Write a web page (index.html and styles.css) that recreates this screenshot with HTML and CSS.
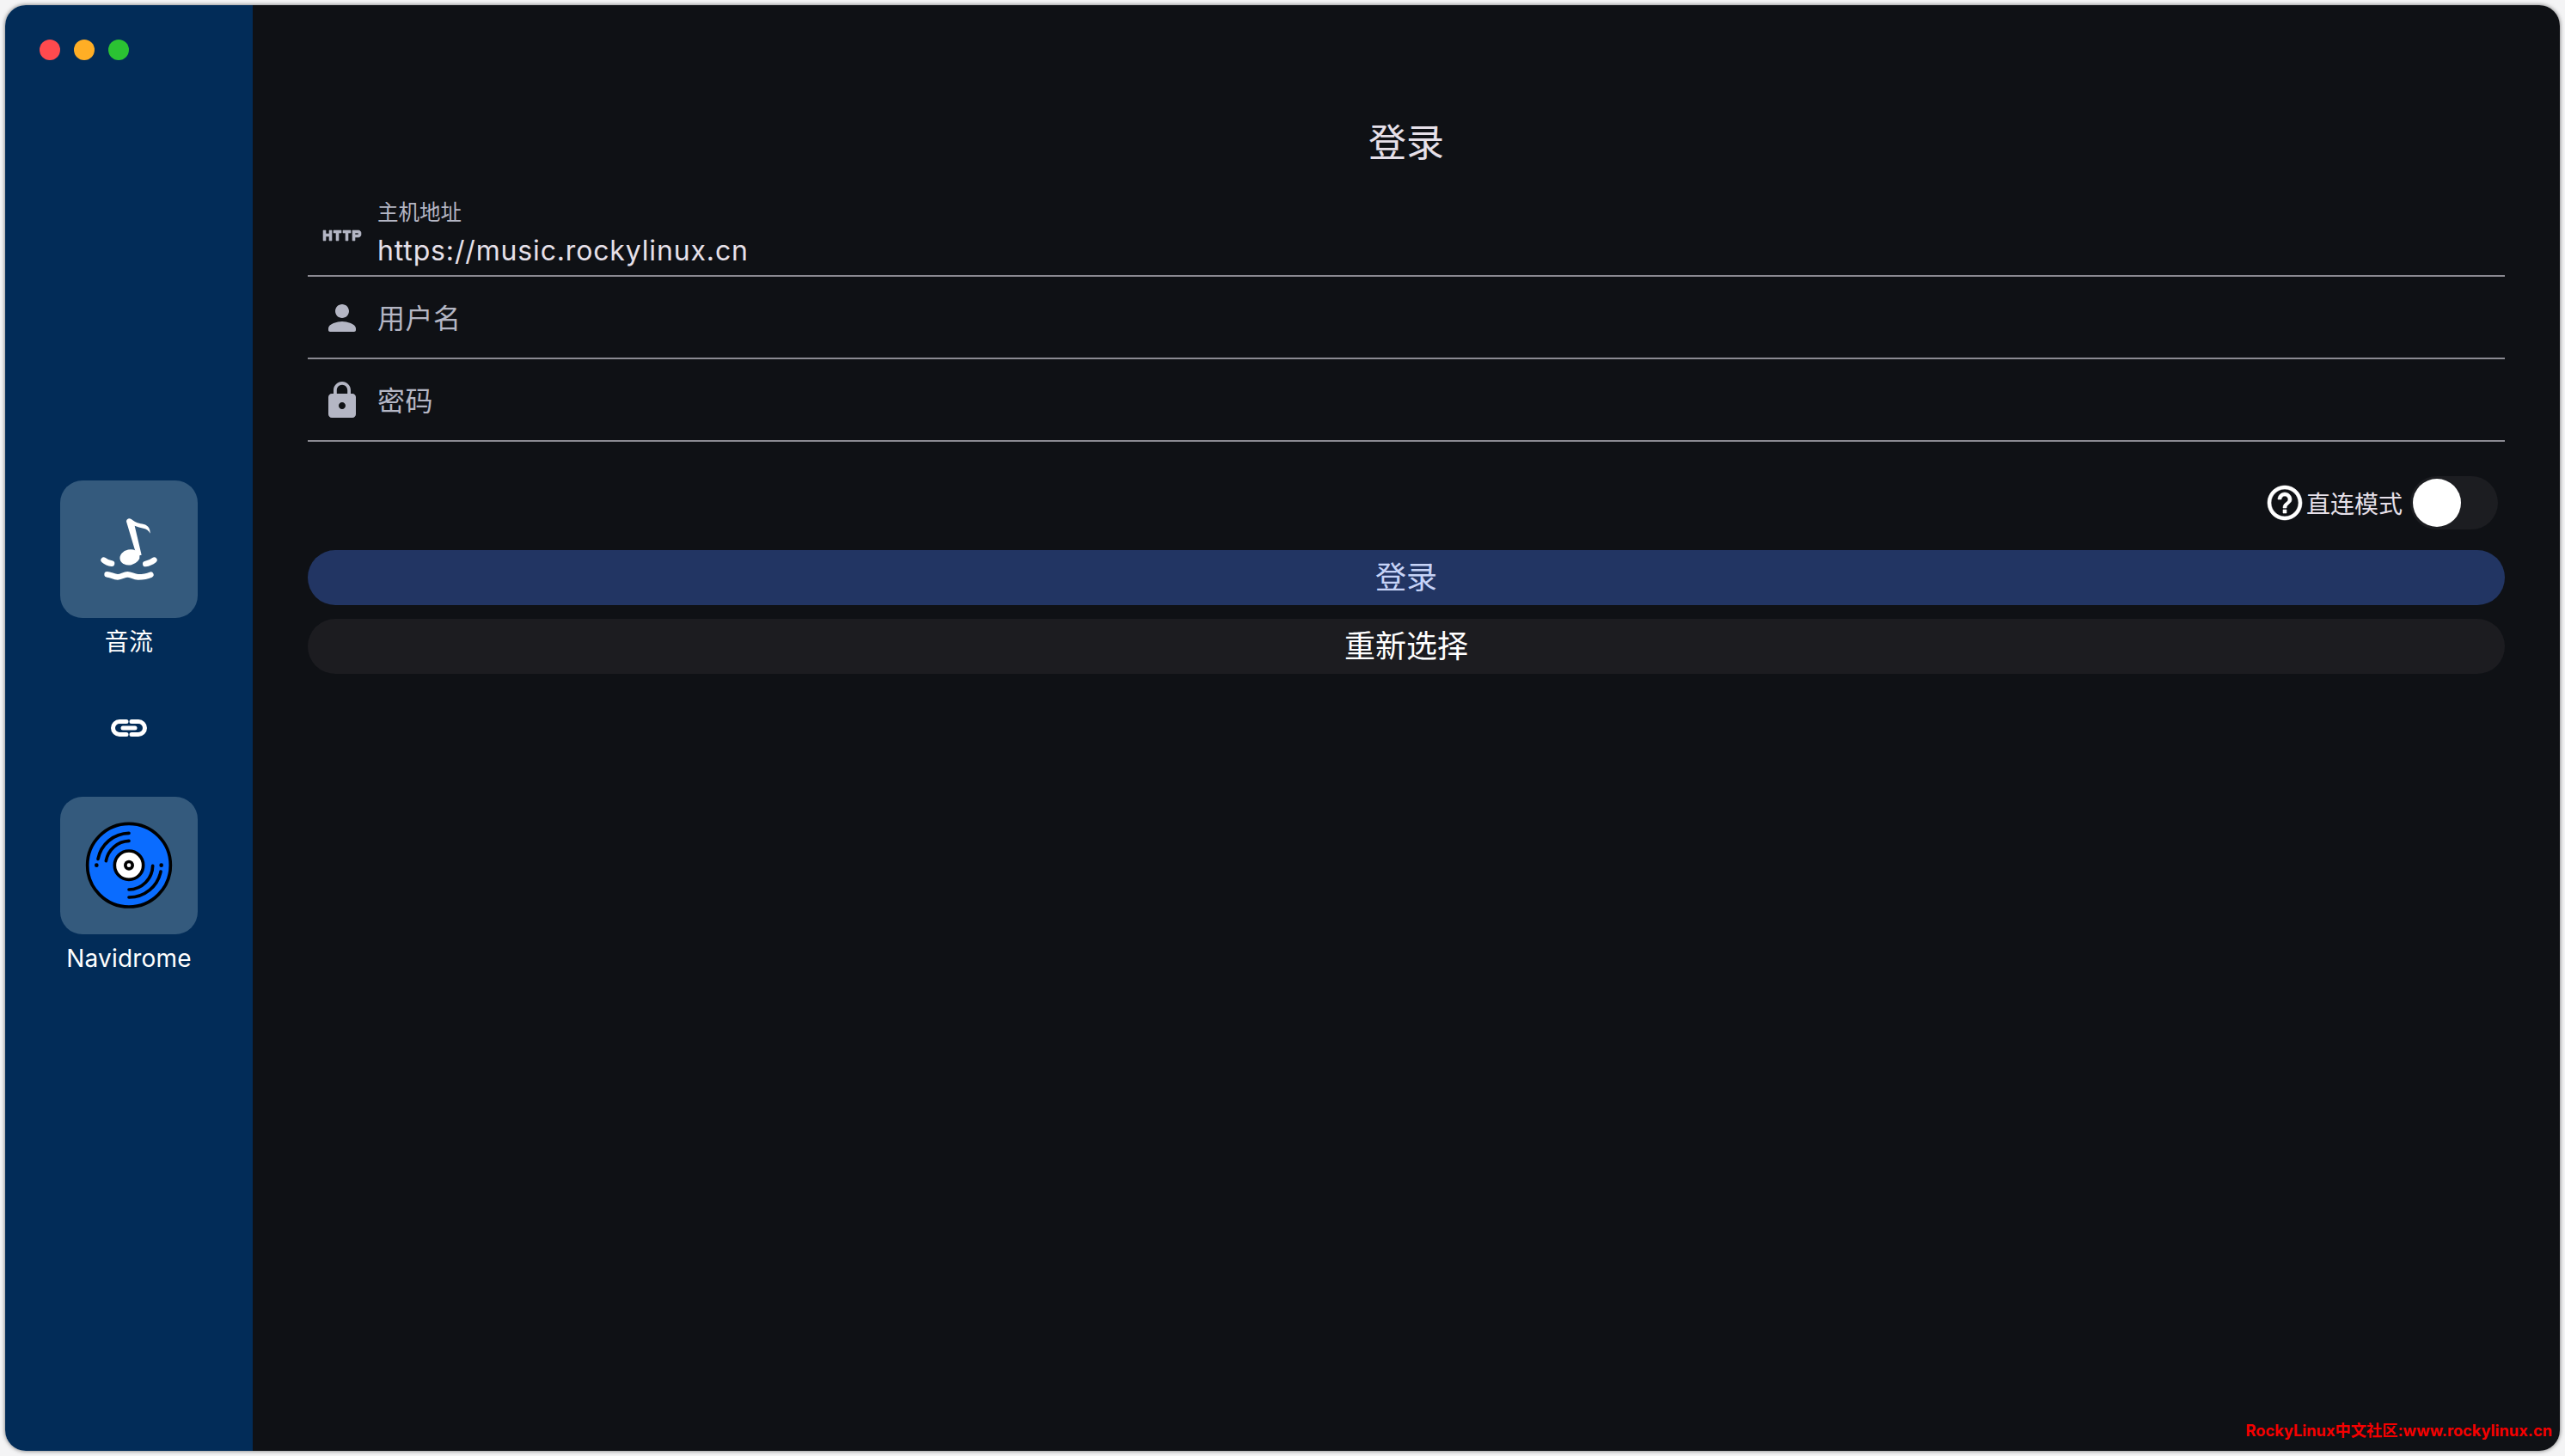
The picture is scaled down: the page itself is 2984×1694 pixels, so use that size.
FILE: index.html
```html
<!DOCTYPE html>
<html lang="zh-CN">
<head>
<meta charset="utf-8">
<title>登录</title>
<link rel="stylesheet" href="styles.css">
</head>
<body>
<div class="window">
  <aside class="sidebar">
    <div class="traffic">
      <span class="dot dot-red"></span>
      <span class="dot dot-yellow"></span>
      <span class="dot dot-green"></span>
    </div>
    <div class="tile-item">
      <div class="tile">
        <svg class="tile-art" viewBox="90 57 480 480">
          <path class="note-fill" d="M321 200c0-9 10-13 17-8 14 12 30 15 44 18 15 4 23 16 22 32-5-10-12-16-24-18-10-2-20-5-30-9l24 102-17 3-36-120z"/>
          <ellipse class="note-fill" cx="333" cy="325" rx="35" ry="27" transform="rotate(-12 333 325)"/>
          <path class="note-stroke" d="M242 335q12 10 28 12"/>
          <path class="note-stroke" d="M388 348q16-2 30-13"/>
          <path class="note-stroke" d="M254 385C266 385 276 394 291 394C305 394 312 385 325 385C338 385 346 394 362 394C380 394 395 391 406 386"/>
        </svg>
      </div>
      <div class="tile-label">音流</div>
    </div>
    <svg class="link-icon" viewBox="126 823 48 48">
      <path class="link-stroke" d="M147 839.5h-8a7.5 7.5 0 0 0 0 15h8"/>
      <path class="link-stroke" d="M153 839.5h8a7.5 7.5 0 0 1 0 15h-8"/>
      <path class="link-stroke" d="M143 847h14"/>
    </svg>
    <div class="tile-item">
      <div class="tile">
        <svg class="tile-art" viewBox="90 81 480 480">
          <circle class="disc-body" cx="330" cy="320" r="145"/>
          <path class="disc-groove" d="M330 208A112 112 0 0 0 222 298"/>
          <path class="disc-groove" d="M330 235A85 85 0 0 0 250 305"/>
          <path class="disc-groove" d="M330 432A112 112 0 0 0 441 342"/>
          <path class="disc-groove" d="M330 405A85 85 0 0 0 413 322"/>
          <circle class="disc-black" cx="217" cy="320" r="7"/>
          <circle class="disc-black" cx="443" cy="320" r="7"/>
          <circle class="disc-hub" cx="330" cy="320" r="50"/>
          <circle class="disc-black" cx="330" cy="320" r="18"/>
          <circle class="disc-white" cx="330" cy="320" r="7"/>
        </svg>
      </div>
      <div class="tile-label">Navidrome</div>
    </div>
  </aside>
  <main class="main">
    <h1 class="title">登录</h1>
    <div class="field field-filled">
      <svg class="field-icon field-icon-http" viewBox="0 0 24 24"><path d="M4.5 11h-2V9H1v6h1.5v-2.5h2V15H6V9H4.5v2zm2.5-.5h1.5V15H10v-4.5h1.5V9H7v1.5zm5.5 0H14V15h1.5v-4.5H17V9h-4.5v1.5zm9-1.5H18v6h1.5v-2h2c.8 0 1.5-.7 1.5-1.5v-1c0-.8-.7-1.5-1.5-1.5zm0 2.5h-2v-1h2v1z"/></svg>
      <div class="field-body">
        <div class="field-label">主机地址</div>
        <div class="field-value">https://music.rockylinux.cn</div>
      </div>
    </div>
    <div class="field">
      <svg class="field-icon" viewBox="0 0 24 24"><path d="M12 12c2.21 0 4-1.79 4-4s-1.79-4-4-4-4 1.79-4 4 1.79 4 4 4zm0 2c-2.67 0-8 1.34-8 4v1c0 .55.45 1 1 1h14c.55 0 1-.45 1-1v-1c0-2.66-5.33-4-8-4z"/></svg>
      <div class="field-placeholder">用户名</div>
    </div>
    <div class="field">
      <svg class="field-icon" viewBox="0 0 24 24"><path d="M18 8h-1V6c0-2.76-2.24-5-5-5S7 3.24 7 6v2H6c-1.1 0-2 .9-2 2v10c0 1.1.9 2 2 2h12c1.1 0 2-.9 2-2V10c0-1.1-.9-2-2-2zm-6 9c-1.1 0-2-.9-2-2s.9-2 2-2 2 .9 2 2-.9 2-2 2zm3.1-9H8.9V6c0-1.71 1.39-3.1 3.1-3.1 1.71 0 3.1 1.39 3.1 3.1v2z"/></svg>
      <div class="field-placeholder">密码</div>
    </div>
    <div class="direct-row">
      <svg class="help-icon" viewBox="0 0 24 24"><path d="M11 18h2v-2h-2v2zm1-16C6.48 2 2 6.48 2 12s4.48 10 10 10 10-4.48 10-10S17.52 2 12 2zm0 18c-4.41 0-8-3.59-8-8s3.59-8 8-8 8 3.59 8 8-3.59 8-8 8zm0-14c-2.21 0-4 1.79-4 4h2c0-1.1.9-2 2-2s2 .9 2 2c0 2-3 1.75-3 5h2c0-2.25 3-2.5 3-5 0-2.21-1.79-4-4-4z"/></svg>
      <span class="direct-label">直连模式</span>
      <span class="switch"><span class="switch-thumb"></span></span>
    </div>
    <div class="button button-primary">登录</div>
    <div class="button button-secondary">重新选择</div>
    <div class="watermark">RockyLinux中文社区:www.rockylinux.cn</div>
  </main>
</div>
</body>
</html>
```

FILE: styles.css
```css
* { box-sizing: border-box; }
html, body { height: 100%; }
body {
  margin: 0;
  padding: 6px;
  background: #f4f4f5;
  font-family: Inter, "Noto Sans CJK SC", sans-serif;
}
.window {
  position: relative;
  display: flex;
  height: 100%;
  border-radius: 24px;
  overflow: hidden;
  box-shadow: 0 0 5px rgba(0, 0, 0, 0.55);
}
.sidebar {
  position: relative;
  flex: 0 0 288px;
  display: flex;
  flex-direction: column;
  align-items: center;
  justify-content: center;
  background: #022c58;
}
.traffic {
  position: absolute;
  top: 40px;
  left: 40px;
  display: flex;
  gap: 16px;
}
.dot { width: 24px; height: 24px; border-radius: 50%; }
.dot-red { background: #ff4a4e; }
.dot-yellow { background: #ffae25; }
.dot-green { background: #2bc233; }
.tile-item { display: flex; flex-direction: column; align-items: center; width: 100%; }
.tile {
  width: 160px;
  height: 160px;
  border-radius: 26px;
  background: #345a7d;
}
.tile-art { display: block; width: 160px; height: 160px; }
.tile-label {
  margin-top: 8px;
  height: 40px;
  line-height: 40px;
  font-size: 28px;
  letter-spacing: 0.2px;
  color: #fff;
}
.link-icon {
  display: block;
  width: 48px;
  height: 48px;
  margin: 56px 0;
}
.link-stroke { fill: none; stroke: #fff; stroke-width: 5; stroke-linecap: round; }
.note-fill { fill: #fff; }
.note-stroke { fill: none; stroke: #fff; stroke-width: 20; stroke-linecap: round; }
.disc-body { fill: #0a6cff; stroke: #000; stroke-width: 11; }
.disc-groove { fill: none; stroke: #000; stroke-width: 11; stroke-linecap: round; }
.disc-black { fill: #000; }
.disc-white { fill: #fff; }
.disc-hub { fill: #fff; stroke: #000; stroke-width: 11; }

.main {
  position: relative;
  flex: 1;
  padding: 0 64px;
  background: #0f1115;
  color: #e6e0e9;
}
.title {
  margin: 0;
  padding-top: 132px;
  height: 216px;
  line-height: 56px;
  text-align: center;
  font-size: 44px;
  font-weight: 400;
  color: #e6e0e9;
}
.field {
  display: flex;
  align-items: center;
  height: 96px;
  padding-top: 2px;
  border-bottom: 2px solid #8b8a92;
}
.field-filled { height: 100px; padding-top: 0; }
.field-icon {
  flex: 0 0 48px;
  width: 48px;
  height: 48px;
  margin: 0 17px 0 16px;
  fill: #b4b6c4;
}
.field-icon-http {
  margin-top: 6px;
  stroke: #b4b6c4;
  stroke-width: 0.3;
}
.field-body { display: flex; flex-direction: column; }
.field-label {
  height: 30px;
  line-height: 30px;
  font-size: 24.5px;
  color: #b4b6c4;
}
.field-value {
  height: 48px;
  padding-top: 10px;
  line-height: 40px;
  font-size: 32px;
  letter-spacing: 0.85px;
  color: #e6e0e9;
}
.field-placeholder {
  padding-bottom: 4px;
  font-size: 32px;
  letter-spacing: 0.5px;
  color: #b4b6c4;
}
.direct-row {
  display: flex;
  align-items: center;
  justify-content: flex-end;
  height: 62px;
  margin-top: 40px;
  padding-right: 8px;
}
.help-icon { width: 48px; height: 48px; fill: #fff; stroke: #fff; stroke-width: 0.3; }
.direct-label {
  margin: 0 9px 0 1px;
  font-size: 28px;
  color: #e6e0e9;
}
.switch {
  position: relative;
  display: block;
  width: 102px;
  height: 62px;
  border-radius: 31px;
  background: #1c1d21;
}
.switch-thumb {
  position: absolute;
  top: 3px;
  left: 3px;
  width: 56px;
  height: 56px;
  border-radius: 50%;
  background: #fff;
}
.button {
  height: 64px;
  line-height: 64px;
  border-radius: 32px;
  text-align: center;
  font-size: 36px;
}
.button-primary {
  margin-top: 24px;
  background: #223563;
  color: #c6d3f7;
}
.button-secondary {
  margin-top: 16px;
  background: #1c1c20;
  color: #fff;
}
.watermark {
  position: absolute;
  right: 9px;
  bottom: 12px;
  font-size: 18.25px;
  font-weight: 700;
  color: #f50000;
}
```
